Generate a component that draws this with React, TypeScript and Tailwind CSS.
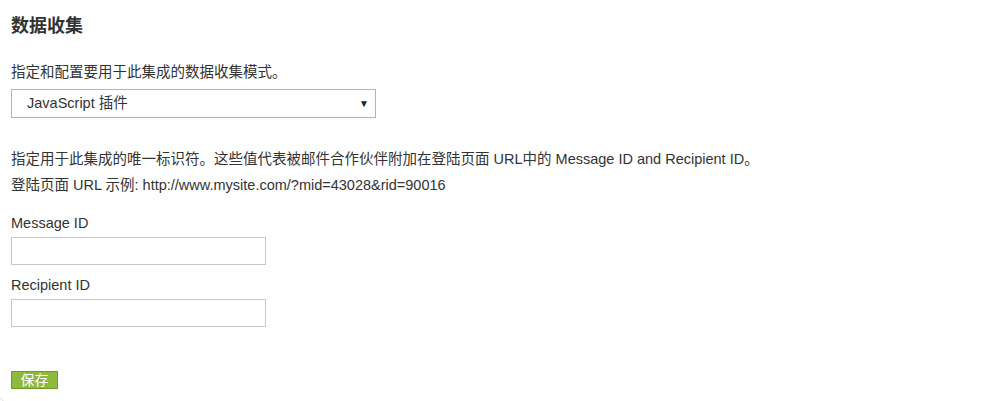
export default function App() {
  return (
    <main
      className="relative w-[996px] h-[401px] bg-white text-[#333] overflow-hidden"
      style={{ fontFamily: '"Liberation Sans", Arial, "Noto Sans CJK SC", sans-serif' }}
    >
      <div className="pl-[11px] pt-[15px]">
        <h1 className="text-[18px] leading-[22px] font-bold text-[#333]">数据收集</h1>
        <p className="mt-[25px] text-[14.5px] leading-[20px]">指定和配置要用于此集成的数据收集模式。</p>
        <div className="mt-[7px] w-[365px] h-[29px] border border-[#b4b4b4] flex items-center justify-between pl-[15px] pr-[6px]">
          <span className="text-[14.5px]">JavaScript 插件</span>
          <span className="text-[10px] text-[#222]">▼</span>
        </div>
        <p className="mt-[28px] text-[14.5px] leading-[26px]">
          指定用于此集成的唯一标识符。这些值代表被邮件合作伙伴附加在登陆页面 URL中的 Message ID and Recipient ID。
          <br />
          登陆页面 URL 示例: http://www.mysite.com/?mid=43028&amp;rid=90016
        </p>
        <label className="block mt-[15px] text-[14.5px] leading-[20px]">Message ID</label>
        <input className="block mt-[4px] w-[255px] h-[28px] border border-[#c8c8c8] outline-none" />
        <label className="block mt-[10px] text-[14.5px] leading-[20px]">Recipient ID</label>
        <input className="block mt-[4px] w-[255px] h-[28px] border border-[#c8c8c8] outline-none" />
        <button className="block mt-[44px] w-[47px] h-[18px] bg-[#8cb93e] border border-[#6f9c25] text-white text-[14px] leading-[16px]">
          保存
        </button>
      </div>
      <div className="absolute left-[-8px] bottom-[-8px] w-[12px] h-[12px] rounded-full border border-[#ddd]" />
    </main>
  );
}
